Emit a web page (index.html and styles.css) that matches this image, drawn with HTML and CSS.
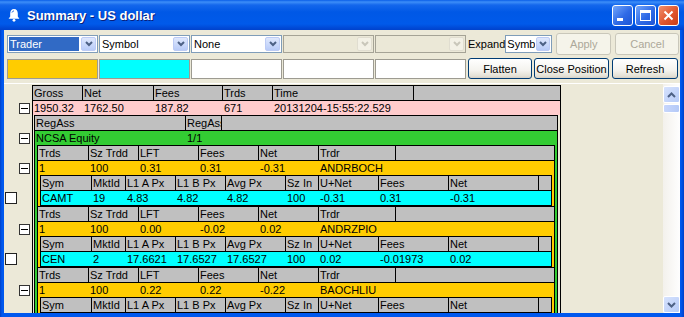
FILE: index.html
```html
<!DOCTYPE html>
<html lang="en">
<head>
    <meta charset="UTF-8">
    <title>Summary - US dollar</title>
    <link rel="stylesheet" href="styles.css">
</head>
<body>
<div class="window">

    <!-- Title bar -->
    <div class="titlebar">
        <svg class="app-icon" width="14" height="14" viewBox="0 0 14 14">
            <path d="M7 1C4.6 1 3.2 3 3.2 5.5V8.6L1.6 10.8H12.4L10.8 8.6V5.5C10.8 3 9.4 1 7 1Z" fill="#fff"/>
            <circle cx="7" cy="12.3" r="1.4" fill="#fff"/>
            <path d="M5 4.5C5.3 3.5 6 3 7 3" stroke="#1a5fd8" stroke-width="1" fill="none"/>
        </svg>
        <span class="title">Summary - US dollar</span>
        <div class="caption-btns">
            <span class="cap"><i class="min-bar"></i></span>
            <span class="cap"><i class="max-box"></i></span>
            <span class="cap close">
                <svg width="11" height="11" viewBox="0 0 11 11"><path d="M1.5 1.5L9.5 9.5M9.5 1.5L1.5 9.5" stroke="#fff" stroke-width="2"/></svg>
            </span>
        </div>
    </div>

    <div class="client">
        <!-- Grouping selectors -->
        <div class="toolbar">
            <div class="combo sel"><span class="val">Trader</span><span class="drop"><svg width="8" height="6" viewBox="0 0 8 6"><path d="M1 1L4 4L7 1" stroke="#4d6185" stroke-width="2" fill="none"/></svg></span></div>
            <div class="combo"><span class="val">Symbol</span><span class="drop"><svg width="8" height="6" viewBox="0 0 8 6"><path d="M1 1L4 4L7 1" stroke="#4d6185" stroke-width="2" fill="none"/></svg></span></div>
            <div class="combo"><span class="val">None</span><span class="drop"><svg width="8" height="6" viewBox="0 0 8 6"><path d="M1 1L4 4L7 1" stroke="#4d6185" stroke-width="2" fill="none"/></svg></span></div>
            <div class="combo off"><span class="val"></span><span class="drop"><svg width="8" height="6" viewBox="0 0 8 6"><path d="M1 1L4 4L7 1" stroke="#c9c7ba" stroke-width="2" fill="none"/></svg></span></div>
            <div class="combo off"><span class="val"></span><span class="drop"><svg width="8" height="6" viewBox="0 0 8 6"><path d="M1 1L4 4L7 1" stroke="#c9c7ba" stroke-width="2" fill="none"/></svg></span></div>
            <span class="lbl">Expand</span>
            <div class="combo small"><span class="val">Symb</span><span class="drop"><svg width="8" height="6" viewBox="0 0 8 6"><path d="M1 1L4 4L7 1" stroke="#4d6185" stroke-width="2" fill="none"/></svg></span></div>
            <button class="btn apply" disabled>Apply</button>
            <button class="btn cancel" disabled>Cancel</button>
        </div>

        <!-- Colour keys + actions -->
        <div class="toolbar second">
            <div class="swatch orange"></div>
            <div class="swatch cyan"></div>
            <div class="swatch"></div>
            <div class="swatch"></div>
            <div class="swatch"></div>
            <button class="btn flatten">Flatten</button>
            <button class="btn close-pos">Close Position</button>
            <button class="btn refresh">Refresh</button>
        </div>

        <!-- Position tree -->
        <div class="panel">
            <div class="gutter">
                <div class="slot top"></div>
                <div class="slot"><span class="toggle"></span></div>
                <div class="slot"></div>
                <div class="slot"><span class="toggle"></span></div>
                <div class="slot"></div>
                <div class="slot"><span class="toggle"></span></div>
                <div class="slot"></div>
                <div class="slot"><span class="check"></span></div>
                <div class="slot gap"></div>
                <div class="slot"><span class="toggle"></span></div>
                <div class="slot"></div>
                <div class="slot"><span class="check"></span></div>
                <div class="slot gap"></div>
                <div class="slot"><span class="toggle"></span></div>
            </div>

            <div class="tree">
                <div class="blk lvl1">
                    <div class="row head">
                        <span class="c" style="width:49px">Gross</span>
                        <span class="c" style="width:71px">Net</span>
                        <span class="c" style="width:69px">Fees</span>
                        <span class="c" style="width:50px">Trds</span>
                        <span class="c" style="width:141px">Time</span>
                        <span class="c fill"></span>
                    </div>
                    <div class="row pink">
                        <span class="c" style="width:49px">1950.32</span>
                        <span class="c" style="width:71px">1762.50</span>
                        <span class="c" style="width:69px">187.82</span>
                        <span class="c" style="width:50px">671</span>
                        <span class="c" style="width:141px">20131204-15:55:22.529</span>
                    </div>
                    <div class="kids">
                        <div class="blk lvl2">
                            <div class="row head">
                                <span class="c" style="width:150px">RegAss</span>
                                <span class="c" style="width:36px">RegAss</span>
                                <span class="c fill"></span>
                            </div>
                            <div class="row green">
                                <span class="c" style="width:150px">NCSA Equity</span>
                                <span class="c" style="width:36px">1/1</span>
                            </div>
                            <div class="kids green-kids">

                                <div class="blk lvl3">
                                    <div class="row head">
                                        <span class="c" style="width:50px">Trds</span>
                                        <span class="c" style="width:50px">Sz Trdd</span>
                                        <span class="c" style="width:60px">LFT</span>
                                        <span class="c" style="width:60px">Fees</span>
                                        <span class="c" style="width:60px">Net</span>
                                        <span class="c" style="width:77px">Trdr</span>
                                        <span class="c fill"></span>
                                    </div>
                                    <div class="row orange">
                                        <span class="c" style="width:50px">1</span>
                                        <span class="c" style="width:50px">100</span>
                                        <span class="c" style="width:60px">0.31</span>
                                        <span class="c" style="width:60px">0.31</span>
                                        <span class="c" style="width:60px">-0.31</span>
                                        <span class="c" style="width:77px">ANDRBOCH</span>
                                    </div>
                                    <div class="kids orange-kids">
                                        <div class="blk lvl4">
                                            <div class="row head">
                                                <span class="c" style="width:50px">Sym</span>
                                                <span class="c" style="width:34px">MktId</span>
                                                <span class="c" style="width:50px">L1 A Px</span>
                                                <span class="c" style="width:50px">L1 B Px</span>
                                                <span class="c" style="width:60px">Avg Px</span>
                                                <span class="c" style="width:33px">Sz In</span>
                                                <span class="c" style="width:60px">U+Net</span>
                                                <span class="c" style="width:70px">Fees</span>
                                                <span class="c" style="width:90px">Net</span>
                                                <span class="c fill"></span>
                                            </div>
                                            <div class="row cyan">
                                                <span class="c" style="width:50px">CAMT</span>
                                                <span class="c" style="width:34px">19</span>
                                                <span class="c" style="width:50px">4.83</span>
                                                <span class="c" style="width:50px">4.82</span>
                                                <span class="c" style="width:60px">4.82</span>
                                                <span class="c" style="width:33px">100</span>
                                                <span class="c" style="width:60px">-0.31</span>
                                                <span class="c" style="width:70px">0.31</span>
                                                <span class="c" style="width:90px">-0.31</span>
                                            </div>
                                        </div>
                                    </div>
                                </div>

                                <div class="blk lvl3">
                                    <div class="row head">
                                        <span class="c" style="width:50px">Trds</span>
                                        <span class="c" style="width:50px">Sz Trdd</span>
                                        <span class="c" style="width:60px">LFT</span>
                                        <span class="c" style="width:60px">Fees</span>
                                        <span class="c" style="width:60px">Net</span>
                                        <span class="c" style="width:77px">Trdr</span>
                                        <span class="c fill"></span>
                                    </div>
                                    <div class="row orange">
                                        <span class="c" style="width:50px">1</span>
                                        <span class="c" style="width:50px">100</span>
                                        <span class="c" style="width:60px">0.00</span>
                                        <span class="c" style="width:60px">-0.02</span>
                                        <span class="c" style="width:60px">0.02</span>
                                        <span class="c" style="width:77px">ANDRZPIO</span>
                                    </div>
                                    <div class="kids orange-kids">
                                        <div class="blk lvl4">
                                            <div class="row head">
                                                <span class="c" style="width:50px">Sym</span>
                                                <span class="c" style="width:34px">MktId</span>
                                                <span class="c" style="width:50px">L1 A Px</span>
                                                <span class="c" style="width:50px">L1 B Px</span>
                                                <span class="c" style="width:60px">Avg Px</span>
                                                <span class="c" style="width:33px">Sz In</span>
                                                <span class="c" style="width:60px">U+Net</span>
                                                <span class="c" style="width:70px">Fees</span>
                                                <span class="c" style="width:90px">Net</span>
                                                <span class="c fill"></span>
                                            </div>
                                            <div class="row cyan">
                                                <span class="c" style="width:50px">CEN</span>
                                                <span class="c" style="width:34px">2</span>
                                                <span class="c" style="width:50px">17.6621</span>
                                                <span class="c" style="width:50px">17.6527</span>
                                                <span class="c" style="width:60px">17.6527</span>
                                                <span class="c" style="width:33px">100</span>
                                                <span class="c" style="width:60px">0.02</span>
                                                <span class="c" style="width:70px">-0.01973</span>
                                                <span class="c" style="width:90px">0.02</span>
                                            </div>
                                        </div>
                                    </div>
                                </div>

                                <div class="blk lvl3">
                                    <div class="row head">
                                        <span class="c" style="width:50px">Trds</span>
                                        <span class="c" style="width:50px">Sz Trdd</span>
                                        <span class="c" style="width:60px">LFT</span>
                                        <span class="c" style="width:60px">Fees</span>
                                        <span class="c" style="width:60px">Net</span>
                                        <span class="c" style="width:77px">Trdr</span>
                                        <span class="c fill"></span>
                                    </div>
                                    <div class="row orange">
                                        <span class="c" style="width:50px">1</span>
                                        <span class="c" style="width:50px">100</span>
                                        <span class="c" style="width:60px">0.22</span>
                                        <span class="c" style="width:60px">0.22</span>
                                        <span class="c" style="width:60px">-0.22</span>
                                        <span class="c" style="width:77px">BAOCHLIU</span>
                                    </div>
                                    <div class="kids orange-kids">
                                        <div class="blk lvl4">
                                            <div class="row head">
                                                <span class="c" style="width:50px">Sym</span>
                                                <span class="c" style="width:34px">MktId</span>
                                                <span class="c" style="width:50px">L1 A Px</span>
                                                <span class="c" style="width:50px">L1 B Px</span>
                                                <span class="c" style="width:60px">Avg Px</span>
                                                <span class="c" style="width:33px">Sz In</span>
                                                <span class="c" style="width:60px">U+Net</span>
                                                <span class="c" style="width:70px">Fees</span>
                                                <span class="c" style="width:90px">Net</span>
                                                <span class="c fill"></span>
                                            </div>
                                        </div>
                                    </div>
                                </div>

                            </div>
                        </div>
                    </div>
                </div>
            </div>

            <div class="filler"></div>

            <!-- Vertical scrollbar -->
            <div class="scrollbar">
                <span class="sb-btn"><svg width="9" height="6" viewBox="0 0 9 6"><path d="M1 5L4.5 1.5L8 5" stroke="#4d6185" stroke-width="2" fill="none"/></svg></span>
                <span class="sb-thumb"></span>
                <span class="sb-track"></span>
                <span class="sb-btn"><svg width="9" height="6" viewBox="0 0 9 6"><path d="M1 1L4.5 4.5L8 1" stroke="#4d6185" stroke-width="2" fill="none"/></svg></span>
            </div>
        </div>
    </div>
</div>
</body>
</html>
```

FILE: styles.css
```css
* {
    box-sizing: border-box;
    margin: 0;
    padding: 0;
}
body {
    font-family: "Liberation Sans", Arial, sans-serif;
    font-size: 11px;
    background-color: #0055e5;
    width: 684px;
    height: 317px;
    overflow: hidden;
}
.window {
    width: 684px;
    height: 317px;
    display: flex;
    flex-direction: column;
    background: linear-gradient(to right, #0040c8, #0058ee 2px, #0058ee 681px, #0040c8);
}

/* Title bar */
.titlebar {
    height: 30px;
    flex-shrink: 0;
    display: flex;
    align-items: center;
    padding-left: 7px;
    background: linear-gradient(#0a5ee8 0, #3d8ef8 2px, #1467ec 5px, #0058e6 12px, #005aea 24px, #0049d6 28px, #0042cc 30px);
    color: white;
}
.app-icon {
    margin-right: 6px;
}
.title {
    font-weight: bold;
    font-size: 13px;
    text-shadow: 1px 1px 0 #0a1e78;
}
.caption-btns {
    margin-left: auto;
    margin-right: 5px;
    display: flex;
    gap: 2px;
}
.cap {
    width: 21px;
    height: 21px;
    border: 1px solid #fff;
    border-radius: 3px;
    background: linear-gradient(135deg, #73a6fb, #2f6ae6 55%, #1c55d6);
    display: flex;
    align-items: center;
    justify-content: center;
}
.cap.close {
    background: linear-gradient(135deg, #f0906d, #e0552e 55%, #c83d17);
}
.min-bar {
    width: 6px;
    height: 3px;
    background: #fff;
    margin: 8px 6px 0 0;
}
.max-box {
    width: 11px;
    height: 11px;
    border: 1px solid #fff;
    border-top-width: 3px;
}

/* Client area */
.client {
    flex: 1;
    min-height: 0;
    overflow: hidden;
    margin: 0 4px 4px 4px;
    background-color: #ece9d8;
    display: flex;
    flex-direction: column;
}
.toolbar {
    display: flex;
    flex-shrink: 0;
    align-items: center;
    height: 22px;
    margin-top: 3px;
    padding-left: 3px;
}
.toolbar.second {
    height: 21px;
    margin-top: 3px;
}
.combo {
    width: 91px;
    height: 18px;
    margin-right: 1px;
    border: 1px solid #7f9db9;
    background-color: white;
    display: flex;
}
.combo .val {
    flex: 1;
    line-height: 16px;
    padding-left: 2px;
    white-space: nowrap;
    overflow: hidden;
}
.combo.sel .val {
    background-color: #316ac5;
    color: white;
    margin: 1px;
    line-height: 14px;
    padding-left: 1px;
}
.combo .drop {
    width: 15px;
    margin: 1px;
    border: 1px solid #bccbf5;
    border-radius: 2px;
    background: linear-gradient(#dfe8fd, #b8cbf8);
    display: flex;
    align-items: center;
    justify-content: center;
}
.combo.off {
    background-color: #ebe8d7;
    border-color: #a5a396;
}
.combo.off .drop {
    background: #f3f1e6;
    border-color: #e0ddd0;
}
.combo.small {
    width: 47px;
}
.combo.small .val {
    padding-left: 1px;
}
.combo.small .drop {
    width: 14px;
}
.lbl {
    padding: 0 0 0 1px;
}
.btn {
    font-family: "Liberation Sans", Arial, sans-serif;
    font-size: 11px;
    height: 21px;
    border: 1px solid #003c74;
    border-radius: 3px;
    background: linear-gradient(#ffffff, #f4f3ee 60%, #e3e0d5 90%, #d6d0c5);
    color: black;
}
.btn:disabled {
    border-color: #c9c7ba;
    background: #f5f4ea;
    color: #aca899;
}
.apply {
    width: 55px;
    height: 22px;
    margin-left: 3px;
}
.cancel {
    width: 64px;
    height: 22px;
    margin-left: 4px;
}
.swatch {
    width: 91px;
    height: 20px;
    margin-right: 1px;
    border: 1px solid #9d9b91;
    background-color: white;
}
.swatch.orange {
    background-color: #ffcc00;
}
.swatch.cyan {
    background-color: #00ffff;
}
.flatten {
    width: 64px;
    margin-left: 1px;
}
.close-pos {
    width: 75px;
    margin-left: 2px;
}
.refresh {
    width: 66px;
    margin-left: 3px;
}

/* Tree panel */
.panel {
    flex: 1;
    min-height: 0;
    margin-top: 4px;
    display: flex;
    overflow: hidden;
    border-top: 1px solid #fff;
}
.gutter {
    width: 28px;
    flex-shrink: 0;
    display: flex;
    flex-direction: column;
}
.slot {
    height: 15px;
    flex-shrink: 0;
    display: flex;
    align-items: flex-end;
    justify-content: flex-end;
    padding: 0 2px 1px 0;
}
.slot.top {
    height: 16px;
}
.slot.gap {
    height: 16px;
}
.toggle {
    width: 11px;
    height: 11px;
    border: 1px solid #333;
    background-color: white;
    display: flex;
    align-items: center;
    justify-content: center;
}
.toggle::before {
    content: "";
    width: 7px;
    height: 1px;
    background-color: #000;
}
.check {
    width: 12px;
    height: 12px;
    border: 1px solid #222;
    background-color: white;
    margin-right: 13px;
}
.tree {
    width: 529px;
    flex-shrink: 0;
    margin-top: 1px;
    align-self: flex-start;
}
.blk {
    border-left: 1px solid #000;
    border-right: 1px solid #000;
}
.lvl4 {
    border-bottom: 1px solid #000;
}
.row {
    display: flex;
    height: 15px;
    border-top: 1px solid #000;
    line-height: 14px;
    white-space: nowrap;
}
.c {
    padding-left: 1px;
    overflow: hidden;
    flex-shrink: 0;
    border-left: 1px solid transparent;
}
.c:first-child {
    border-left: none;
}
.row.head {
    background-color: #c0c0c0;
}
.row.head .c {
    border-left-color: #000;
}
.row.head .c:first-child {
    border-left: none;
}
.c.fill {
    flex: 1;
}
.row.pink {
    background-color: #ffcccc;
}
.row.green {
    background-color: #33cc33;
}
.row.orange {
    background-color: #ffcc00;
}
.row.cyan {
    background-color: #00ffff;
}
.kids {
    padding: 0 2px 0 1px;
}
.green-kids {
    background-color: #33cc33;
    padding: 0 2px 0 2px;
}
.orange-kids {
    background-color: #ffcc00;
    padding: 0 2px 0 2px;
}
.filler {
    flex: 1;
}

/* Scrollbar */
.scrollbar {
    width: 17px;
    flex-shrink: 0;
    display: flex;
    flex-direction: column;
    background: linear-gradient(to right, #f3f1ec, #fefefe);
    padding-top: 2px;
}
.sb-btn {
    height: 17px;
    flex-shrink: 0;
    border: 1px solid #fff;
    border-radius: 2px;
    background: linear-gradient(135deg, #d6e2fd, #b6cbf8);
    display: flex;
    align-items: center;
    justify-content: center;
}
.sb-thumb {
    height: 9px;
    flex-shrink: 0;
    margin-top: 1px;
    border: 1px solid #fff;
    border-radius: 2px;
    background: linear-gradient(to right, #c7d6fc, #b4c9f7);
}
.sb-track {
    flex: 1;
}
```
